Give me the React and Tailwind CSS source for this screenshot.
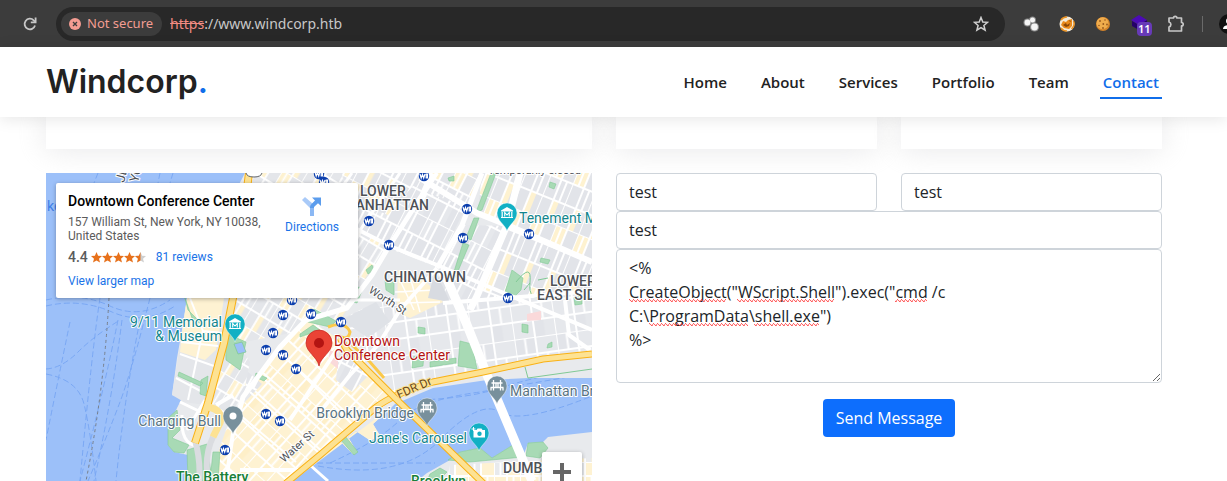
import React from "react";

const NAV = ["Home", "About", "Services", "Portfolio", "Team", "Contact"];

const METRO = [
  [292, 300], [283, 315], [311, 314], [319, 174], [324, 182], [424, 176], [467, 209], [369, 221],
  [389, 245], [463, 238], [529, 234], [508, 298], [341, 322], [273, 333], [266, 350], [283, 355],
  [296, 369], [266, 414], [280, 421], [225, 450],
];

const BRIDGE = "M-3.500 -6V4.500M3.500 -6V4.500M-6.500 1.500H6.500M-5.500 -3H5.500M-6 1.500V4.500M6 1.500V4.500M-1 -3V1.500M1 -3V1.500";

function Pin({ x, y, color, children }) {
  return (
    <g transform={`translate(${x} ${y})`}>
      <path d="M0 18C-1.500 12-10 8-10 0A10 10 0 1 1 10 0C10 8 1.500 12 0 18Z" fill={color} stroke="#fff" strokeWidth=".4" />
      {children}
    </g>
  );
}

function Museum() {
  return (
    <g fill="#fff">
      <path d="M-6 -2.500L0 -6L6 -2.500V-1.500H-6Z" />
      <path d="M-4.800 -1V4M4.800 -1V4M-6 4.500H6" stroke="#fff" strokeWidth="1.200" />
      <path d="M-2.300 3.500V-.5L0 2L2.300 -.5V3.500" fill="none" stroke="#fff" strokeWidth="1.100" />
    </g>
  );
}

function Grid({ id, w, h, angle, a, b, line = 1.4 }) {
  return (
    <pattern id={id} width={w * 2} height={h * 3} patternUnits="userSpaceOnUse" patternTransform={`rotate(${angle})`}>
      <rect width={w * 2} height={h * 3} fill={a} />
      <rect width={w} height={h} fill={b} />
      <rect x={w} y={h * 2} width={w / 2} height={h} fill={b} />
      <path
        d={`M0 0V${h * 3}M${w} 0V${h * 3}M0 0H${w * 2}M0 ${h}H${w * 2}M0 ${h * 2}H${w * 2}M${w / 2} 0V${h}M${w * 1.5} ${h}V${h * 2}`}
        stroke="#fff"
        strokeWidth={line}
      />
    </pattern>
  );
}

function Highway({ d, w = 7 }) {
  return (
    <>
      <path d={d} fill="none" stroke="#f9b115" strokeWidth={w + 1} />
      <path d={d} fill="none" stroke="#fde293" strokeWidth={w - 1} />
    </>
  );
}

function CityMap() {
  return (
    <svg viewBox="46 173 546 384" preserveAspectRatio="xMinYMin slice" className="block h-96 w-full" role="img" aria-label="Map of Lower Manhattan">
      <defs>
        <Grid id="west" w={14} h={20} angle={20} a="#e8eaed" b="#fef5dc" />
        <Grid id="tribeca" w={11} h={17} angle={31} a="#e4e6ea" b="#fef2d0" line={1.8} />
        <Grid id="soho" w={12} h={21} angle={27} a="#e2e4e9" b="#e6e8ec" line={2} />
        <Grid id="mixed" w={11} h={19} angle={27} a="#e2e4e9" b="#fef2d0" line={2} />
        <Grid id="east" w={12} h={22} angle={22} a="#e2e4e9" b="#fef2d0" line={2} />
        <Grid id="river" w={21} h={17} angle={-8} a="#e6e8ec" b="#e2e4e9" line={2} />
        <Grid id="fidi" w={13} h={15} angle={42} a="#fef2d2" b="#feefc8" line={2} />
        <Grid id="dumbo" w={13} h={14} angle={0} a="#fef2d2" b="#e8eaed" line={2} />
      </defs>
      <rect x="46" y="173" width="546" height="384" fill="#9cc0f9" />

      <g fill="none" stroke="#76a5f3" strokeWidth=".9" strokeDasharray="6 3">
        <path d="M70 322Q58 380 46 440M100 298Q92 350 80 481M118 320Q104 390 80 481M122 320Q112 400 94 481M46 369Q62 368 78 352T120 320M46 374Q78 380 84 404T96 481M140 320Q124 400 116 481M46 300Q80 292 110 306T170 300M46 306Q80 298 112 312T175 306M150 298Q132 370 120 402T88 481M98 173L94 183M160 173L158 183M173 173L170 183" />
        <path d="M317 463H435M330 463Q380 440 400 420T480 392L592 373M318 466Q400 481 440 440T500 412T592 396M420 400Q470 398 500 388T592 366" />
      </g>
      <path d="M109 298Q104 390 86 481" fill="none" stroke="#777f8b" strokeWidth="1" strokeDasharray="3 3" />

      <path d="M245 173H592V378L528 378L487 380L433 388L395 404L373 424L379 434L371 441L356 431L348 437L357 452L353 454L340 441L318 462L293 481L280 500H187L188 455L174 452L168 445V420L175 412L182 398L172 395L177 358L182 330L187 298L215 230Z" fill="#e8eaed" />
      <path d="M182 333L187 298H230L222 350L205 405L184 402L172 395Z" fill="#e4e6ea" />
      <path d="M182 333L187 298H224L216 350L205 360L180 352Z" fill="#fef2d2" />
      <path d="M180 354L214 366M176 378L210 396M203 330L188 400M190 298L203 331L223 333M181 342L218 346" stroke="#fff" strokeWidth="2" fill="none" />
      <path d="M248 173H360L420 173L388 248L342 318L306 330L230 345L235 298Z" fill="url(#tribeca)" />
      <path d="M342 173H482L437 267L388 248L350 225Z" fill="url(#soho)" />
      <path d="M342 173H424L388 215L352 200ZM432 173H482L466 206L424 192Z" fill="url(#mixed)" />
      <path d="M482 173H592V262L507 225L478 212Z" fill="url(#east)" />
      <path d="M462 225L510 226L477 300L443 303L437 265Z" fill="url(#soho)" />
      <path d="M507 226L592 264V295L477 301Z" fill="url(#east)" />
      <path d="M340 320L380 300L443 303L592 291V352L485 372L433 380L396 398Z" fill="url(#river)" />
      <path d="M306 318L340 340L395 398L285 481H208L226 430L243 397Z" fill="url(#fidi)" />
      <path d="M340 340L372 372L352 392L336 380ZM240 365L262 384L243 404L226 398Z" fill="url(#soho)" />
      <path d="M223 350L240 346L250 362L243 397L228 420L210 410Z" fill="url(#tribeca)" />
      <path d="M395 404L373 424L379 434L371 441L356 431L348 437L357 452L353 454L340 441L318 462Z" fill="#fef2d2" />
      <path d="M398 270L425 280L443 302L410 318L397 312Z" fill="#fef2d2" />
      <path d="M398 276L414 310M408 270L420 312M395 292L436 290M400 303L440 302" stroke="#fff" strokeWidth="1.500" />
      <path d="M342 320L376 302L390 322L368 338Z" fill="#dfe2e7" />
      <path d="M435 270L450 302L428 298Z" fill="#d8dbe1" />
      <path d="M527 314L541 311V320L527 321Z" fill="#fad9da" />
      <path d="M328 361L338 369V354L330 350Z" fill="#fad9da" />

      <path d="M417 481L427 473L450 460L460 452L480 448L492 458L513 445L523 457L528 443L543 442L548 437L592 432V560H400Z" fill="#e8eaed" />
      <path d="M450 465L592 458V560H430Z" fill="url(#dumbo)" />

      <g fill="#a8dab5" stroke="#81c995" strokeWidth=".6">
        <path d="M491 173H496L482 210L476 212Z" />
        <path d="M474 218L479 218L471 240L466 238Z" />
        <path d="M463 243L469 245L456 276L452 278Z" />
        <path d="M512 270L523 278L521 290L511 300L505 292Z" />
        <path d="M385 280L394 282V295L386 290ZM366 270L372 265L374 270L368 274ZM357 287L363 288L357 303L353 302Z" />
        <path d="M314 309L336 321L330 327L308 322ZM300 334L313 325L320 330L300 337Z" />
        <path d="M460 341L472 344L477 369L458 366ZM413 357L424 354L423 366L412 368ZM430 362L456 358V363L430 367Z" />
        <path d="M185 298L192 318L204 326L188 310Z" />
        <path d="M225 333L246 342L240 370L226 360ZM256 373L267 378L264 381L255 377Z" />
        <path d="M201 380L208 376L206 396L200 394ZM179 372L203 383L200 386L178 376Z" />
        <path d="M187 450L207 444L212 481H188ZM220 452L218 481H210L213 452Z" />
        <path d="M168 418L177 410L180 430L172 438L189 445L184 453L174 452L168 445Z" />
        <path d="M460 452L480 448L492 458L513 445L523 457L470 462L448 460ZM528 443L543 442L548 448L540 458L526 456Z" />
        <path d="M430 474L440 468L447 472L438 481H427ZM340 439L345 436L358 452L354 455Z" />
        <path d="M550 182L556 184L554 189L549 187ZM574 297L582 296V304L575 305ZM541 258L550 260L548 264L540 262ZM418 327L425 328V334L418 333ZM548 344L552 342V347L547 348ZM522 324L528 325V333L522 332ZM448 178L454 176V181L449 181Z" />
      </g>
      <path d="M516 282Q532 262 530 282T544 296M538 280L548 278M524 290L530 283M525 367L528 378L592 369" fill="none" stroke="#81c995" strokeWidth="1" />
      <path d="M234 344L242 342L246 352L238 354Z" fill="#9cc0f9" stroke="#81c995" strokeWidth=".8" />

      <g fill="none" stroke="#fff" strokeLinejoin="round">
        <path d="M233 433L243 397L280 347L306 320L347 308L372 275L388 248L422 195L432 173" strokeWidth="5" />
        <path d="M233 433L226 481M216 405L233 395M290 420L340 345M240 470L300 470L350 430" strokeWidth="4" />
        <path d="M250 392L318 452M262 372L336 436M284 356L352 424M240 415L296 462" strokeWidth="2" />
        <path d="M343 222L390 246L437 265L592 330" strokeWidth="4" />
        <path d="M340 190L352 173M346 250L400 173M352 300L400 300" strokeWidth="3" />
        <path d="M420 178L477 213L507 225L592 262" strokeWidth="6" />
        <path d="M482 173L462 225L437 268" strokeWidth="5" />
        <path d="M520 173L507 225L477 296L470 310" strokeWidth="7" />
        <path d="M443 303L507 298L592 291" strokeWidth="4" />
        <path d="M437 268L400 310L378 345L350 375L320 412" strokeWidth="4" />
        <path d="M565 300L569 335L590 350M437 173L420 200" strokeWidth="4" />
        <path d="M443 270L467 325L487 375L522 458L532 481" strokeWidth="9" />
        <path d="M182 415Q180 445 198 446M180 402L205 414M187 430L205 400" strokeWidth="3" />
        <path d="M310 465L328 481" strokeWidth="3" />
      </g>
      <g fill="none" stroke="#dadce0" strokeWidth="6">
        <path d="M195 440Q201 462 199 481M213 437Q204 455 208 481" />
      </g>
      <Highway d="M249 173L233 298L224 343L208 403L195 443" />
      <path d="M208 407Q224 410 220 423L213 437" fill="none" stroke="#fde293" strokeWidth="7" />
      <path d="M328 327Q345 320 350 332Q348 342 338 335M352 345L370 362L384 378" fill="none" stroke="#fbc94a" strokeWidth="3" />
      <Highway w={6} d="M285 484L320 455L375 408Q393 394 433 382L483 372L543 359L592 354" />
      <Highway w={6} d="M340 338L347 350L395 398L484 484" />

      {METRO.map(([x, y]) => (
        <g key={`${x}-${y}`} transform={`translate(${x} ${y})`}>
          <circle r="5.200" fill="#0c3fae" />
          <path d="M-4 -2L-2.800 2L-1.500 -1.500L-.3 2L1 -2M2.200 -2V2H3.500V-2Z" fill="none" stroke="#fff" strokeWidth="1.200" />
        </g>
      ))}

      <path d="M246 173Q247 177 254 177T262 173" fill="#fff" stroke="#5f6368" />

      <g className="font-['Roboto',sans-serif] text-[14px]" stroke="#fff" strokeWidth="2" strokeLinejoin="round" style={{ paintOrder: "stroke" }}>
        <g fill="#4d5156" className="font-medium">
          <text x="360" y="196">LOWER</text>
          <text x="429" y="210" textAnchor="end">MANHATTAN</text>
          <text x="425" y="282" textAnchor="middle">CHINATOWN</text>
          <text x="550" y="286">LOWER</text>
          <text x="537" y="300">EAST SIDE</text>
          <text x="503" y="473">DUMBO</text>
        </g>
        <g fill="#12858d">
          <text x="519" y="223">Tenement Museum</text>
          <text x="222" y="327" textAnchor="end">9/11 Memorial</text>
          <text x="222" y="341" textAnchor="end">&amp; Museum</text>
          <text x="467" y="443" textAnchor="end">Jane's Carousel</text>
        </g>
        <g fill="#587382">
          <text x="221" y="426" textAnchor="end">Charging Bull</text>
          <text x="414" y="418" textAnchor="end">Brooklyn Bridge</text>
          <text x="510" y="396">Manhattan Bridge</text>
        </g>
        <g fill="#188038" className="font-medium">
          <text x="176" y="482">The Battery</text>
          <text x="411" y="486">Brooklyn</text>
        </g>
        <g fill="#b31412">
          <text x="334" y="346">Downtown</text>
          <text x="334" y="360">Conference Center</text>
        </g>
        <text x="47" y="211" fill="#3f7fe8" stroke="none">ke</text>
        <g className="text-[11px]" fill="#4d5156">
          <text transform="translate(368 292) rotate(33)">Worth St</text>
          <text transform="translate(284 463) rotate(-42)">Water St</text>
          <text x="488" y="174">Temporarily closed</text>
        </g>
        <text transform="translate(399 399) rotate(-24)" fill="#6b4a1c" stroke="#fde293" className="text-[12px]">FDR Dr</text>
      </g>
      <g className="font-['Roboto',sans-serif] text-[13px]" fill="#4d5156" stroke="#fff" strokeWidth="2" style={{ paintOrder: "stroke" }}>
        <text transform="translate(124 183) rotate(-75)">JERSEY</text>
        <text transform="translate(138 183) rotate(-75)">YORK</text>
      </g>

      <Pin x={507} y={213} color="#12b0c4"><Museum /></Pin>
      <Pin x={235} y={324} color="#12b0c4"><Museum /></Pin>
      <Pin x={233} y={416} color="#78909c"><circle r="3.500" fill="#fff" /></Pin>
      <Pin x={427} y={408} color="#78909c"><path d={BRIDGE} fill="none" stroke="#fff" strokeWidth="1.300" /></Pin>
      <Pin x={497} y={386} color="#78909c"><path d={BRIDGE} fill="none" stroke="#fff" strokeWidth="1.300" /></Pin>
      <Pin x={479} y={433} color="#12b0c4">
        <path d="M-5.500 -3H-2.500L-1.500 -4.500H2.500L3.500 -3H6V4.500H-5.500Z" fill="#fff" />
        <circle cx=".5" cy=".8" r="2.200" fill="#12b0c4" />
        <path d="M-5.500 -6V-2M-7.500 -4H-3.500" stroke="#fff" />
      </Pin>
      <g transform="translate(319 343)">
        <path d="M0 23C-1.500 14-13 9-13 0A13 13 0 1 1 13 0C13 9 1.500 14 0 23Z" fill="#ea4335" stroke="#c5221f" strokeWidth=".7" />
        <circle r="5" fill="#b31412" />
      </g>
    </svg>
  );
}

function Stars() {
  const star = "M5.500 0L7.100 3.800L11 4.100L8 6.700L9 10.600L5.500 8.500L2 10.600L3 6.700L0 4.100L3.900 3.800Z";
  return (
    <svg width="55" height="11" viewBox="0 0 55 11" role="img" aria-label="4.4 stars">
      {[0, 1, 2, 3].map((i) => <path key={i} d={star} fill="#e7711b" transform={`translate(${i * 11} 0)`} />)}
      <path d={star} fill="#cfcfcf" transform="translate(44 0)" />
      <path d="M5.500 0V8.500L2 10.600L3 6.700L0 4.100L3.900 3.800Z" fill="#e7711b" transform="translate(44 0)" />
    </svg>
  );
}

function PlaceCard() {
  return (
    <div className="absolute left-2.5 top-2.5 flex h-[115px] w-[302px] justify-between rounded-xs bg-white px-3 pt-2.5 font-['Roboto',sans-serif] text-xs shadow-[0_1px_4px_rgba(0,0,0,0.3)]">
      <div className="w-[200px]">
        <h2 className="text-sm leading-4 font-medium text-black">Downtown Conference Center</h2>
        <p className="mt-1.5 leading-[14px] text-[#5b5b5b]">157 William St, New York, NY 10038, United States</p>
        <div className="mt-1.5 flex h-4 items-center">
          <span className="mr-[3px] text-sm font-medium text-[#5b5b5b]">4.4</span>
          <Stars />
          <a href="#reviews" className="ml-2.5 text-[#1a73e8]">81 reviews</a>
        </div>
        <a href="#map" className="mt-2 block leading-4 text-[#1a73e8]">View larger map</a>
      </div>
      <a href="#directions" className="mr-[7px] flex flex-col items-center pt-0.5 text-[#1a73e8]">
        <svg width="22" height="22" viewBox="0 0 22 22" aria-hidden="true">
          <path d="M1 5L4 2L12 9L9 13Z" fill="#a9caf8" />
          <path d="M9 21V12Q9 10 11 8.500L14 5.500L11 2.500H20V11L17 8.200L13 12V21Z" fill="#5c9ded" />
          <path d="M9 13V21H13V13Z" fill="#8bb8f4" />
        </svg>
        <span className="mt-0.5">Directions</span>
      </a>
    </div>
  );
}

function BrowserBar() {
  return (
    <div className="flex h-[47px] shrink-0 items-center overflow-hidden bg-[#3c3c3c] font-['Noto_Sans',sans-serif]">
      <button aria-label="Reload" className="ml-[22px] mr-[18px]">
        <svg width="16" height="16" viewBox="0 0 16 16" fill="none" stroke="#c7c7c7" strokeWidth="1.800">
          <path d="M13 9.500A5.300 5.300 0 1 1 11.700 4.300L13.500 6" />
          <path d="M13.600 1.500V6.300H8.800" />
        </svg>
      </button>
      <div className="flex h-[34px] flex-1 items-center rounded-full bg-[#282828] pl-[5px] pr-4">
        <button className="flex h-6 items-center gap-1.5 rounded-full bg-[#3c3c3c] pl-2 pr-[9px] text-[13px] text-[#f39c92]">
          <svg width="12" height="12" viewBox="0 0 12 12" aria-hidden="true">
            <circle cx="6" cy="6" r="6" fill="#f39c92" />
            <path d="M4 4L8 8M8 4L4 8" stroke="#3c3c3c" strokeWidth="1.300" />
          </svg>
          Not secure
        </button>
        <span className="ml-2 flex-1 text-[14px] text-[#c7c7c7]">
          <span className="text-[#f28b82] line-through">https</span>://www.windcorp.htb
        </span>
        <button aria-label="Bookmark this page">
          <svg width="16" height="16" viewBox="0 0 16 16" fill="none" stroke="#d0d0d0" strokeWidth="1.500">
            <path d="M8 1.500L9.800 6L14.600 6.300L10.900 9.400L12.100 14.200L8 11.600L3.900 14.200L5.100 9.400L1.400 6.300L6.200 6Z" />
          </svg>
        </button>
      </div>
      <div className="ml-[17px] flex items-center">
        <svg width="18" height="18" viewBox="0 0 18 18" aria-hidden="true">
          <g fill="#8a8a8a"><circle cx="5.500" cy="7.500" r="4" /><circle cx="10.500" cy="5" r="3.500" /><circle cx="12.500" cy="12" r="4.600" /></g>
          <g fill="#f4f4f4"><circle cx="5.500" cy="7.500" r="2.900" /><circle cx="10.500" cy="5" r="2.500" /><circle cx="12.500" cy="12" r="3.400" /></g>
        </svg>
        <svg className="ml-[19px]" width="16" height="16" viewBox="0 0 16 16" aria-hidden="true">
          <circle cx="8" cy="8" r="7.500" fill="#f3ead8" />
          <path d="M2 4A7 7 0 0 1 8 1M14.500 5A7 7 0 0 1 12.500 13M8 15A7 7 0 0 1 2 12" stroke="#e9901f" strokeWidth="1.500" fill="none" />
          <path d="M2 9L4 5L7 6L9 4L13 3V10L10 13L5 12Z" fill="#e98a1c" />
          <path d="M4 9L7 7L8 9L11 7L10 10L7 11ZM10 4L12 5L11 6Z" fill="#8a4708" />
        </svg>
        <svg className="ml-5" width="16" height="16" viewBox="0 0 16 16" aria-hidden="true">
          <circle cx="8" cy="8" r="7" fill="#d3832a" />
          <circle cx="7.500" cy="7.300" r="6" fill="#f0ac4c" />
          <g fill="#96571c"><circle cx="5" cy="5" r=".9" /><circle cx="10" cy="4" r=".8" /><circle cx="8.300" cy="8" r=".9" /><circle cx="4" cy="9.500" r=".8" /><circle cx="12" cy="8.500" r=".9" /><circle cx="8" cy="12" r=".9" /></g>
        </svg>
        <span className="relative ml-5 block size-5">
          <svg width="18" height="18" viewBox="0 0 18 18" aria-hidden="true">
            <path d="M1 7L8 11L16 6V11L8 16L1 12Z" fill="#240068" />
            <path d="M0 6L8 1L16 6L8 11Z" fill="#4c0bb5" />
          </svg>
          <span className="absolute left-1.5 top-2 rounded-sm bg-[#673ab7] px-px text-[11px] leading-[14px] font-semibold text-white">11</span>
        </span>
        <svg className="ml-4" width="18" height="18" viewBox="0 0 18 18" fill="none" stroke="#c7c7c7" strokeWidth="1.700" strokeLinejoin="round" aria-hidden="true">
          <path d="M2 3H6.500A1.700 1.700 0 0 1 9.900 3H14.500V7.500A1.700 1.700 0 0 1 14.500 10.900V16H2V12A2.600 2.600 0 0 0 2 7Z" />
        </svg>
        <span className="ml-[17px] h-4 w-px bg-[#6a6a6a]" />
        <span className="-mr-3 ml-4 block size-5">
          <svg width="20" height="20" viewBox="0 0 20 20" aria-hidden="true">
            <circle cx="10" cy="10" r="10" fill="#111" />
            <circle cx="10" cy="7" r="3" fill="#fff" />
            <path d="M4 15Q4 11 10 11T16 15Z" fill="#fff" />
          </svg>
        </span>
      </div>
    </div>
  );
}

const MISSPELT = [
  [0, 41, 97], [108, 41, 97], [266, 41, 32], [20, 65, 99], [125, 65, 65],
];

function ContactForm() {
  const field = "w-full rounded-[4px] border border-[#ced4da] bg-white px-3 py-[6px] text-base leading-6 text-[#212529] outline-none";
  return (
    <form className="block" onSubmit={(e) => e.preventDefault()}>
      <div className="grid grid-cols-2 gap-6">
        <input aria-label="Your Name" className={field} defaultValue="test" />
        <input aria-label="Your Email" className={field} defaultValue="test" />
      </div>
      <input aria-label="Subject" className={`${field} block`} defaultValue="test" />
      <div className="relative">
        <textarea
          aria-label="Message"
          rows={5}
          spellCheck={false}
          className={`${field} block`}
          defaultValue={'<%\nCreateObject("WScript.Shell").exec("cmd /c\nC:\\ProgramData\\shell.exe")\n%>'}
        />
        <svg className="pointer-events-none absolute left-[13px] top-[9px]" width="320" height="72" aria-hidden="true">
          <defs>
            <pattern id="squiggle" width="4" height="3" patternUnits="userSpaceOnUse" y="41">
              <path d="M-1 .5L0 .5Q1 .5 1.500 1.500T3 2.500T4.500 .5" fill="none" stroke="#f33" strokeWidth="1" />
            </pattern>
          </defs>
          {MISSPELT.map(([x, y, w]) => <rect key={`${x}-${y}`} x={x} y={y} width={w} height="3" fill="url(#squiggle)" />)}
        </svg>
      </div>
      <div className="mt-4 text-center">
        <button type="submit" className="rounded-[4px] bg-[#0d6efd] px-[13px] py-[7px] text-base leading-6 text-white">Send Message</button>
      </div>
    </form>
  );
}

export default function App() {
  const card = "bg-white shadow-[0_0_30px_rgba(214,215,216,0.6)]";
  return (
    <div className="flex h-screen flex-col overflow-hidden bg-white font-['Open_Sans',sans-serif]">
      <BrowserBar />
      <header className="relative z-10 flex h-[70px] shrink-0 items-center justify-between bg-white pl-[46px] pr-[65px] shadow-[0_2px_15px_rgba(0,0,0,0.1)]">
        <a href="#top" className="font-['Inter',sans-serif] text-[32px] leading-10 font-semibold text-[#222]">
          Windcorp<span className="text-[#106eea]">.</span>
        </a>
        <nav className="flex gap-7 pt-0.5 text-[15px] font-semibold text-[#222]">
          {NAV.map((item) => (
            <a
              key={item}
              href={`#${item.toLowerCase()}`}
              className={item === "Contact" ? "border-b-2 border-[#106eea] px-[3px] pt-1 pb-[3px] text-[#106eea]" : "border-b-2 border-transparent px-[3px] pt-1 pb-[3px]"}
            >
              {item}
            </a>
          ))}
        </nav>
      </header>
      <main className="min-h-0 flex-1 overflow-hidden pl-[46px] pr-[65px]">
        <div className="grid h-8 grid-cols-4 gap-6">
          <div className={`${card} col-span-2`} />
          <div className={card} />
          <div className={card} />
        </div>
        <div className="mt-6 grid grid-cols-2 gap-6">
          <section className="relative h-96 overflow-hidden">
            <CityMap />
            <PlaceCard />
            <div className="absolute bottom-6 right-2.5 flex w-10 flex-col items-center rounded-xs bg-white shadow-[0_1px_4px_rgba(0,0,0,0.3)]">
              <button aria-label="Zoom in" className="flex size-10 items-center justify-center">
                <svg width="18" height="18" viewBox="0 0 18 18"><path d="M9 0V18M0 9H18" stroke="#666" strokeWidth="4" /></svg>
              </button>
              <span className="h-px w-[30px] bg-gray-200" />
              <button aria-label="Zoom out" className="flex size-10 items-center justify-center">
                <svg width="18" height="18" viewBox="0 0 18 18"><path d="M0 9H18" stroke="#666" strokeWidth="4" /></svg>
              </button>
            </div>
          </section>
          <ContactForm />
        </div>
      </main>
    </div>
  );
}
